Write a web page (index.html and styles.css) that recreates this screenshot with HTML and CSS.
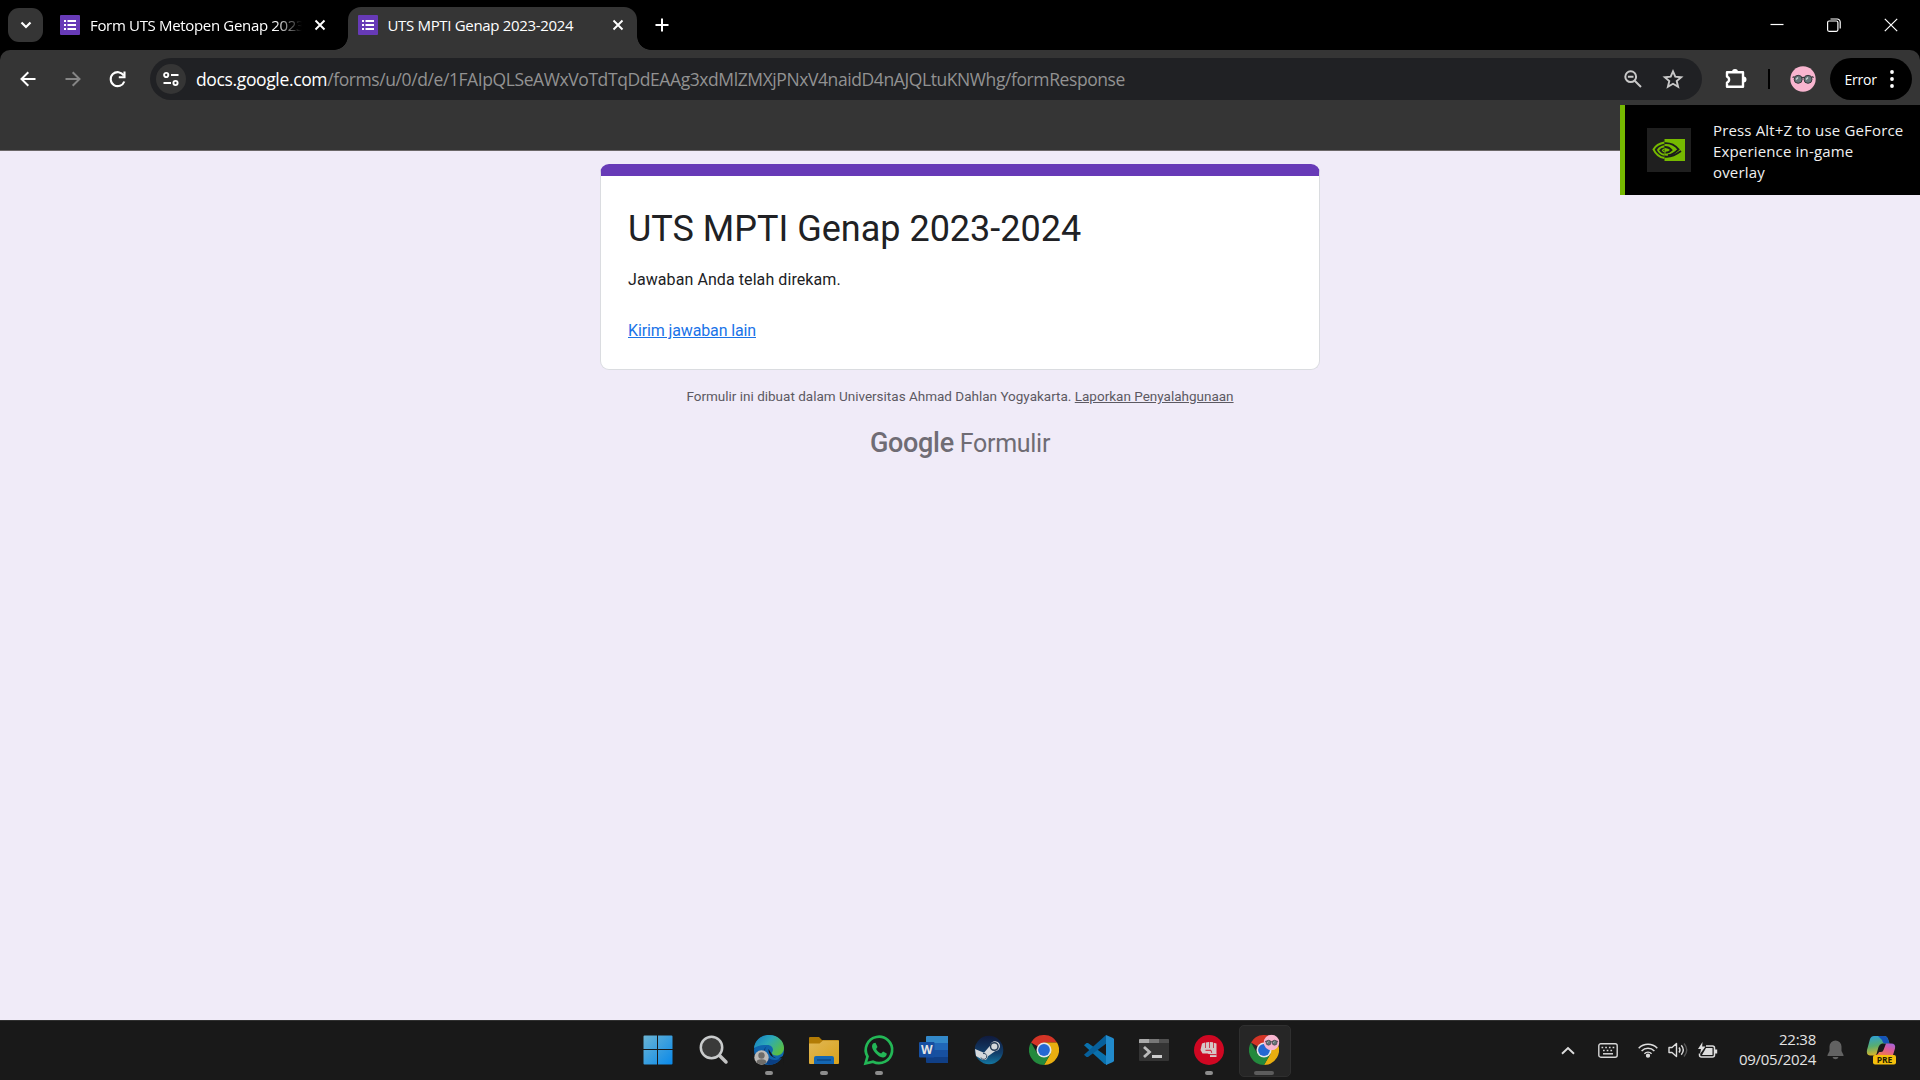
FILE: index.html
```html
<!DOCTYPE html>
<html lang="id">
<head>
<meta charset="utf-8">
<title>UTS MPTI Genap 2023-2024</title>
<link rel="stylesheet" href="styles.css">
</head>
<body>
<svg class="defs" width="0" height="0" aria-hidden="true">
  <defs>
    <symbol id="form" viewBox="0 0 20 20"><rect width="20" height="20" rx="1" fill="#673ab7"/><path d="M4 5h2v2H4zM4 9h2v2H4zM4 13h2v2H4zM7.500 5H16v2H7.500zM7.500 9H16v2H7.500zM7.500 13H16v2H7.500z" fill="#fff"/></symbol>
    <symbol id="x" viewBox="0 0 12 12"><path d="M1.500 1.500l9 9M10.500 1.500l-9 9" stroke="#fff" stroke-width="1.900" fill="none"/></symbol>
    <symbol id="chrome" viewBox="0 0 30 30">
      <path d="M15 15L2 7.500A15 15 0 0 1 28 7.500H15z" fill="#d33426"/>
      <path d="M28 7.500A15 15 0 0 1 15 30L21.500 18.750L15 7.500z" fill="#e9ae10"/>
      <path d="M2 7.500A15 15 0 0 0 15 30L21.500 18.750L15 15L8.500 18.750z" fill="#23893d"/>
      <circle cx="15" cy="15" r="7.500" fill="#e4e6ea"/><circle cx="15" cy="15" r="5.900" fill="#2468d2"/>
    </symbol>
    <symbol id="face" viewBox="0 0 26 26"><circle cx="13" cy="13" r="12.700" fill="#f8b5cf"/><g stroke="#35373b" stroke-width="1" fill="#657478"><circle cx="8.200" cy="13.300" r="4"/><circle cx="18" cy="13.300" r="4"/></g><path d="M2.500 11.500l2-.8M23.700 11.500l-2-.8M11.500 12q1.600-1.300 3.200 0" stroke="#35373b" stroke-width="1.300" fill="none"/><path d="M6 13.500l2-2M16 13.500l2-2" stroke="#c9d3d3" stroke-width="1.300"/></symbol>
  </defs>
</svg>

<header class="tabstrip">
  <button class="tab-search"><svg width="12" height="8" viewBox="0 0 12 8"><path d="M1.500 1.500L6 6l4.500-4.500" fill="none" stroke="#fff" stroke-width="2.200"/></svg></button>
  <div class="tab">
    <svg width="20" height="20"><use href="#form"/></svg>
    <span class="tab-title tab-title-cut">Form UTS Metopen Genap 2023</span>
    <svg width="12" height="12"><use href="#x"/></svg>
  </div>
  <div class="tab tab-active">
    <svg width="20" height="20"><use href="#form"/></svg>
    <span class="tab-title">UTS MPTI Genap 2023-2024</span>
    <svg width="12" height="12"><use href="#x"/></svg>
  </div>
  <svg class="new-tab" width="14" height="14" viewBox="0 0 14 14"><path d="M7 .5v13M.5 7h13" stroke="#fff" stroke-width="2"/></svg>
  <div class="window-controls">
    <svg width="14" height="14" viewBox="0 0 14 14"><path d="M.5 6.500h13" stroke="#fff" stroke-width="1.200"/></svg>
    <svg width="14" height="14" viewBox="0 0 14 14" fill="none" stroke="#fff"><rect x=".6" y="3" width="10.300" height="10.300" rx="1.500" stroke-width="1.200"/><path d="M3.500 1h6.700a3 3 0 0 1 3 3v6.500" stroke-width="1.200"/></svg>
    <svg width="14" height="14" viewBox="0 0 14 14"><path d="M.8.8l12.400 12.400M13.200.8L.8 13.200" stroke="#fff" stroke-width="1.200"/></svg>
  </div>
</header>

<div class="toolbar">
  <div class="nav">
    <svg width="16" height="16" viewBox="0 0 16 16" fill="none" stroke="#fff" stroke-width="2"><path d="M15.500 8H2M8.300 1.200L1.500 8l6.800 6.800"/></svg>
    <svg width="16" height="16" viewBox="0 0 16 16" fill="none" stroke="#868686" stroke-width="2"><path d="M.5 8H14M7.700 1.200L14.500 8l-6.800 6.800"/></svg>
    <svg width="17" height="17" viewBox="0 0 17 17" fill="none" stroke="#fff" stroke-width="2.100"><path d="M14.700 4.500A7 7 0 1 0 15.300 10.500M15.500.500v5.700H9.800"/></svg>
  </div>
  <div class="omnibox">
    <span class="site-info"><svg width="16" height="14" viewBox="0 0 16 14" fill="none" stroke="#fff" stroke-width="1.900"><circle cx="3.200" cy="3" r="2.100"/><path d="M8 3h7.500M.5 11H8"/><circle cx="12.500" cy="11" r="2.100"/></svg></span>
    <span class="url"><b>docs.google.com</b>/forms/u/0/d/e/1FAIpQLSeAWxVoTdTqDdEAAg3xdMlZMXjPNxV4naidD4nAJQLtuKNWhg/formResponse</span>
    <svg class="zoom" width="18" height="18" viewBox="0 0 18 18" fill="none" stroke="#c8c8c8" stroke-width="2"><circle cx="6.700" cy="6.700" r="5.400"/><path d="M10.700 10.700l6.300 6.300M3.900 6.700h5.600"/></svg>
    <svg width="20" height="20" viewBox="0 0 20 20" fill="none" stroke="#c8c8c8" stroke-width="1.900"><path d="M10 2.300l2.300 5.400 5.900.500-4.500 3.900 1.400 5.700L10 14.800l-5.100 3 1.400-5.700L1.800 8.200l5.900-.5z"/></svg>
  </div>
  <svg class="ext" width="22" height="22" viewBox="0 0 22 22"><path d="M2 4.200h16v14.600H2v-4.300a3.200 3.200 0 0 0 0-6z" fill="none" stroke="#fff" stroke-width="2.400" stroke-linejoin="round"/><path d="M7 4a3 3 0 0 1 6 0zM18.500 8.500a3 3 0 0 1 0 6z" fill="#fff"/></svg>
  <i class="sep"></i>
  <svg class="avatar" width="26" height="26"><use href="#face"/></svg>
  <div class="error"><span>Error</span><svg width="4" height="18" viewBox="0 0 4 18" fill="#fff"><circle cx="2" cy="2" r="1.900"/><circle cx="2" cy="9" r="1.900"/><circle cx="2" cy="16" r="1.900"/></svg></div>
</div>

<aside class="toast">
  <span class="toast-icon"><svg width="34" height="24" viewBox="0 0 34 24" fill="none"><path d="M12.500 1H33v22H12.500z" fill="#76b900"/><g stroke="#76b900"><path d="M12.500 4.500C7 5.500 3 8.800 1.500 11.400c1.800 4 6 7.800 11 8.700" stroke-width="2"/><path d="M12.500 8.300C9 8.800 7 10.500 6 12c1 2.500 3.500 4.300 6.500 4.800" stroke-width="1.900"/><path d="M12.500 11.200q-1.500.3-2 1.300.7 1 2 1.500" stroke-width="1.300"/></g><g stroke="#1b1b1b"><path d="M12.500 5.200c6-.5 10.500 2 14 6.100-3 3-7.500 5.700-10.500 6" stroke-width="1.900"/><path d="M12.500 9c3.500-.2 5.500 1.200 7 3-1.700 1.800-3.500 2.800-6 2.800M12.500 18.500c6.500 1 12.500-2.500 16.500-5.500" stroke-width="1.900"/></g></svg></span>
  <p>Press Alt+Z to use GeForce<br>Experience in-game<br>overlay</p>
</aside>

<main class="page">
  <section class="card">
    <h1>UTS MPTI Genap 2023-2024</h1>
    <p>Jawaban Anda telah direkam.</p>
    <a class="again">Kirim jawaban lain</a>
  </section>
  <p class="note">Formulir ini dibuat dalam Universitas Ahmad Dahlan Yogyakarta. <a>Laporkan Penyalahgunaan</a></p>
  <p class="brand"><b>Google</b><span>Formulir</span></p>
</main>

<footer class="taskbar">
  <div class="apps">
    <span class="app start"><svg width="30" height="30" viewBox="0 0 30 30"><defs><linearGradient id="wg" x1="0" y1="0" x2="30" y2="30" gradientUnits="userSpaceOnUse"><stop stop-color="#6cb5d4"/><stop offset="1" stop-color="#0788ea"/></linearGradient></defs><path d="M1.500.500H14V14H.5V1.500a1 1 0 0 1 1-1zM15 .5h13.500a1 1 0 0 1 1 1V14H15zM.5 15H14v14.500H1.500a1 1 0 0 1-1-1zM15 15h14.500v13.500a1 1 0 0 1-1 1H15z" fill="url(#wg)"/></svg></span>
    <span class="app"><svg width="30" height="30" viewBox="0 0 30 30"><path d="M20.500 20.500l6.500 6.500" stroke="#c2c2c2" stroke-width="3.500" stroke-linecap="round"/><circle cx="12.500" cy="12.500" r="10.700" fill="#3a3a3a" stroke="#c9cbcc" stroke-width="2.500"/></svg></span>
    <span class="app run"><svg width="30" height="30" viewBox="0 0 30 30"><defs><linearGradient id="eg" x1="0" y1="0" x2="1" y2=".6"><stop stop-color="#1479c4"/><stop offset=".5" stop-color="#2ba9b9"/><stop offset="1" stop-color="#58be45"/></linearGradient></defs><circle cx="15" cy="15" r="15" fill="#0f64ae"/><path d="M0 13C1 5 7 0 15 0c9 0 15 6 15 13 0 5-4 7.500-7.500 7.500-4 0-5.500-2-4-4 1.500-3-1-6.500-5-6.500C8 9.500 3 11 0 13z" fill="url(#eg)"/><path d="M13 11c-5 5 0 15 9 14 3-.3 5-2 6-3-3 5-8 8-13 8-7-3-9-14-2-19z" fill="#0a3f83"/><path d="M14.500 14c-.5 5 4 9.500 10 9.500l5.500-3v9l-1-7c-5 2-10 .5-11-3z" fill="#181818"/><circle cx="7.500" cy="22.500" r="7.200" fill="#bcbab7"/><circle cx="7.500" cy="20.500" r="3.200" fill="#6e6c69"/><path d="M2.500 27.500q0-3.200 5-3.200t5 3.200q-5 4-10 0z" fill="#6e6c69"/></svg></span>
    <span class="app run"><svg width="30" height="30" viewBox="0 0 30 30"><path d="M0 3a1 1 0 0 1 1-1h9l3 3h16a1 1 0 0 1 1 1v5H0z" fill="#b27b05"/><defs><linearGradient id="fg" x1="0" y1="0" x2="1" y2="1"><stop stop-color="#e0b756"/><stop offset="1" stop-color="#daa21a"/></linearGradient></defs><path d="M0 8.500h10.500L14 5.500h15.500l.5.500v22a1 1 0 0 1-1 1H1a1 1 0 0 1-1-1z" fill="url(#fg)"/><path d="M5 29v-6q0-2 2-2h16q2 0 2 2v6z" fill="#1467b3"/><path d="M8 25h14" stroke="#0a437f" stroke-width="1.300"/></svg></span>
    <span class="app run"><svg width="30" height="30" viewBox="0 0 30 30"><path d="M1.500 28.500l2-7A13.200 13.200 0 1 1 9 26.700z" fill="none" stroke="#23b756" stroke-width="2.700"/><path d="M9.500 8.200l2-.4 2 4.200-1.400 2c1 2 2.800 3.600 5 4.500l2-1.900 3.600 1.900c.3 2.500-2 4-4 4C14 22 8 15.500 8 11.500c0-1.500.7-2.700 1.500-3.300z" fill="#23b756"/></svg></span>
    <span class="app"><svg width="30" height="30" viewBox="0 0 30 30"><path d="M7 2a1 1 0 0 1 1-1h21v7H7z" fill="#3389c9"/><path d="M7 8h22v7H7z" fill="#2067b7"/><path d="M7 15h22v7H7z" fill="#1750a0"/><path d="M7 22h22v6H8a1 1 0 0 1-1-1z" fill="#103f86"/><rect y="7" width="15.500" height="15.500" rx="1" fill="#164fa1"/><text x="7.700" y="19" text-anchor="middle" class="word">W</text></svg></span>
    <span class="app"><svg width="30" height="30" viewBox="0 0 30 30"><defs><linearGradient id="sg" x2="0" y2="1"><stop stop-color="#101a3d"/><stop offset=".6" stop-color="#123d68"/><stop offset="1" stop-color="#1377a2"/></linearGradient></defs><circle cx="15" cy="15" r="14.300" fill="url(#sg)"/><path d="M1 14l9 3.700 6-7a5 5 0 1 1 5 5.500l-7 5q-1 4.500-5.200 3.800L2 21z" fill="#d5d8db"/><circle cx="20.300" cy="11.500" r="3.800" fill="#d5d8db" stroke="#273b55" stroke-width="1.500"/><path d="M7 22.500a3 3 0 1 0 2-4" fill="none" stroke="#374d65"/></svg></span>
    <span class="app"><svg width="30" height="30"><use href="#chrome"/></svg></span>
    <span class="app"><svg width="30" height="30" viewBox="0 0 30 30"><path d="M2.500 8L0 10.300l20 18.300L23 30v-8.500L4 8z" fill="#0a71ad"/><path d="M22 0L0 19.700 2.500 22H4L23 8z" fill="#07609b"/><path d="M22 0l7 3 1 1v22l-1 1-7 3z" fill="#218acb"/></svg></span>
    <span class="app"><svg width="30" height="30" viewBox="0 0 30 30"><rect y="4" width="30" height="22" rx="1" fill="#343434"/><path d="M0 8V5a1 1 0 0 1 1-1h9v4z" fill="#aaa"/><path d="M10 4h10v4H10z" fill="#777"/><path d="M20 4h9a1 1 0 0 1 1 1v3H20z" fill="#505050"/><path d="M5 12l5.500 5L5 22" fill="none" stroke="#bbb" stroke-width="2.800"/><path d="M13 21.500h10" stroke="#ccc" stroke-width="3"/></svg></span>
    <span class="app run"><svg width="30" height="30" viewBox="0 0 30 30"><circle cx="15" cy="15" r="15" fill="#cf0722"/><path d="M8 8.500l3-1V13h.7V7.500l3.300-.5v6h.7V7l3.300.3V13h.7V7.800l2.800.7V22H16v-2.500l-2.500-1H8.500L6.500 15z" fill="#d5c7c7"/><path d="M11.500 15.300h5.500l.7 2.500M15 19.600h7.500" fill="none" stroke="#cf0722" stroke-width=".9"/></svg></span>
    <span class="app run focus"><svg width="30" height="30" viewBox="0 0 30 30"><use href="#chrome"/><use href="#face" x="14.500" y="-.5" width="16" height="16"/></svg></span>
  </div>
  <div class="tray">
    <svg class="t1" width="14" height="9" viewBox="0 0 14 9"><path d="M1 7.800L7 2l6 5.800" fill="none" stroke="#ddd" stroke-width="1.900"/></svg>
    <svg class="t2" width="20" height="15" viewBox="0 0 20 15" fill="none" stroke="#d6d6d6"><rect x=".8" y=".8" width="18.400" height="13.400" rx="2" stroke-width="1.400"/><path d="M3.500 4.500h13M5 7.500h11" stroke-width="1.700" stroke-dasharray="1.700 2"/><path d="M5 10.800h10" stroke-width="1.500"/></svg>
    <svg class="t3" width="20" height="16" viewBox="0 0 20 16" fill="none" stroke="#ddd" stroke-width="1.500"><path d="M.7 6.200a13 13 0 0 1 18.600 0M3.600 9a9 9 0 0 1 12.800 0M6.400 11.700a5.200 5.200 0 0 1 7.200 0"/><circle cx="10" cy="13.700" r="1.400" fill="#ddd"/></svg>
    <svg class="t4" width="20" height="16" viewBox="0 0 20 16" fill="none" stroke="#ddd" stroke-width="1.400"><path d="M1 5.500h3L8.500 1.500v13L4 10.500H1z" stroke-linejoin="round"/><path d="M11 5.500q2 2.500 0 5M13.300 3.300q4 4.700 0 9.400"/><path d="M16 1.500q5.500 6.500 0 13" stroke="#555"/></svg>
    <svg class="t5" width="20" height="17" viewBox="0 0 20 17"><path d="M8 4h6.500q2 0 2 2v7q0 2-2 2H3.500q-2 0-2-2v-1.500" fill="none" stroke="#ddd" stroke-width="1.500"/><path d="M8 6h6.500v7H4z" fill="#ddd"/><path d="M18 7.500v4" stroke="#ddd" stroke-width="2.400"/><path d="M4.500 0L0 7h3L2 12l5.500-7.500H4.200z" fill="#ddd"/></svg>
    <div class="clock"><span>22:38</span><span>09/05/2024</span></div>
    <svg class="t6" width="17" height="20" viewBox="0 0 17 20" fill="#626262"><path d="M8.500.500A6 6 0 0 0 2.500 6.500V11L.5 15v1h16v-1l-2-4V6.500a6 6 0 0 0-6-6zM5.500 17h6q-.7 2.300-3 2.300t-3-2.300z"/></svg>
    <svg class="t7" width="30" height="30" viewBox="0 0 30 30"><defs><linearGradient id="cl" x1="0" y1="0" x2=".2" y2="1"><stop stop-color="#2aa0dc"/><stop offset=".55" stop-color="#58ad70"/><stop offset="1" stop-color="#d7b52a"/></linearGradient><linearGradient id="cr" x1="1" y1="0" x2=".4" y2="1"><stop stop-color="#9c65e4"/><stop offset=".5" stop-color="#d95b9c"/><stop offset="1" stop-color="#ee7752"/></linearGradient></defs><path d="M8 1h10q3 0 4 3l1.500 4.500H16Q13.500 9 12.500 12l-2 7q-1 1.500-3 1.500H4Q0 20 1 15L4 4q1.200-3 4-3z" fill="url(#cl)"/><path d="M12 1h6q3 0 4 3l1.500 4.500H19Q17 8.500 16 5z" fill="#1554b8"/><path d="M20 8.500h5q5 0 4 5L27 20H9q3 0 4-3h2q2 0 2.500-2z" fill="url(#cr)"/><rect x="7" y="20" width="23" height="9.500" rx="2" fill="#f4bf0c"/><text x="18.500" y="27.800" text-anchor="middle" class="pre">PRE</text></svg>
  </div>
</footer>
</body>
</html>
```
FILE: styles.css
```css
* { box-sizing: border-box; }
body { margin: 0; width: 1920px; height: 1080px; overflow: hidden; display: flex; flex-direction: column; background: #f0ebf8; font-family: "Open Sans", "Noto Sans", sans-serif; color: #fff; }
p, h1 { margin: 0; font-weight: 400; }
svg { display: block; flex: none; overflow: visible; }
.defs { position: absolute; }

.tabstrip { height: 50px; background: #000; display: flex; align-items: center; padding-left: 8px; }
.tab-search { width: 35px; height: 34px; border: 0; border-radius: 11px; background: #353535; display: grid; place-items: center; padding: 0; }
.tab { display: flex; align-items: center; margin-left: 17px; width: 288px; }
.tab-title { flex: 1; margin-left: 9.500px; font-size: 15px; letter-spacing: -0.330px; line-height: 20px; white-space: nowrap; overflow: hidden; }
.tab-title-cut { flex: none; width: 214px; margin: 0 10px; -webkit-mask-image: linear-gradient(to right, #000 185px, transparent 212px); mask-image: linear-gradient(to right, #000 185px, transparent 212px); }
.tab-active { position: relative; margin-left: 0; width: 289px; height: 43px; align-self: flex-end; padding: 0 13px 7px 10px; background: #353535; border-radius: 13px 13px 0 0; }
.tab-active::before, .tab-active::after { content: ""; position: absolute; bottom: 0; width: 14px; height: 14px; }
.tab-active::before { left: -14px; background: radial-gradient(circle at 0 0, #000 13.5px, #353535 14.2px); }
.tab-active::after { right: -14px; background: radial-gradient(circle at 100% 0, #000 13.5px, #353535 14.2px); }
.new-tab { margin-left: 18px; }
.window-controls { margin-left: auto; display: flex; gap: 43px; padding-right: 22px; }

.toolbar { height: 101px; background: #353535; border-bottom: 1px solid #6b6768; border-radius: 10px 10px 0 0; box-shadow: 0 -10px 0 10px #000; clip-path: inset(0 0 0 0); display: flex; align-items: flex-start; padding: 8px 8px 0 20px; }
.nav { display: flex; align-items: center; gap: 28.5px; height: 42px; width: 130px; }
.omnibox { width: 1552px; height: 42px; border-radius: 21px; background: #202124; display: flex; align-items: center; padding: 0 19px 0 6px; }
.site-info { width: 30px; height: 30px; border-radius: 50%; background: #353535; display: grid; place-items: center; }
.url { flex: 1; margin-left: 10px; font-size: 17.5px; letter-spacing: -0.410px; line-height: 24px; color: #929292; white-space: nowrap; }
.url b { font-weight: 400; letter-spacing: -0.360px; color: #fff; }
.zoom { margin-right: 21px; }
.ext { margin: 10px 0 0 23px; }
.sep { width: 2px; height: 20px; margin: 11px 0 0 21px; background: #000; }
.avatar { margin: 8px 0 0 20px; }
.error { margin-left: auto; width: 82px; height: 42px; border-radius: 21px; background: #000; display: flex; align-items: center; padding: 0 18px 0 14.500px; justify-content: space-between; font-size: 14px; letter-spacing: -0.200px; }

.toast { position: absolute; left: 1620px; top: 105px; width: 300px; height: 90px; background: #000; border-left: 5px solid #76b900; display: flex; align-items: flex-start; padding-top: 15px; }
.toast-icon { width: 44px; height: 44px; margin: 8px 22px 0; background: #1f1f1f; display: grid; place-items: center; }
.toast p { font-size: 15px; letter-spacing: 0.160px; line-height: 21px; white-space: nowrap; color: #f0f0f0; }

.page { flex: 1; padding-top: 13px; display: flex; flex-direction: column; align-items: center; font-family: Roboto, sans-serif; }
.card { width: 720px; height: 206px; border: 1px solid #dadce0; border-top: 12px solid #673ab7; border-radius: 9px; background: #fff; padding: 29px 27px; color: #202124; }
.card h1 { font-size: 36px; line-height: 48px; }
.card p { font-size: 16px; letter-spacing: 0.080px; line-height: 22px; margin-top: 16px; }
.again { display: inline-block; margin-top: 29px; font-size: 16px; letter-spacing: -0.130px; line-height: 22px; color: #1a73e8; text-decoration: underline; }
.note { margin-top: 18px; font-size: 13.5px; line-height: 17px; color: #5c5962; }
.note a { text-decoration: underline; }
.brand { display: flex; align-items: baseline; gap: 6px; margin-top: 20px; line-height: 36px; color: #6f6c74; }
.brand b { font-size: 27px; font-weight: 500; letter-spacing: -0.300px; }
.brand span { font-size: 25px; letter-spacing: -0.300px; }

.taskbar { height: 60px; background: #191919; border-top: 1px solid #303030; display: flex; }
.apps { display: flex; margin-left: 631.5px; }
.app { position: relative; width: 55px; height: 58px; display: grid; place-items: center; }
.app svg { position: relative; z-index: 1; }
.start { padding-right: 2px; }
.run::after { content: ""; position: absolute; left: 23.5px; bottom: 4px; width: 8px; height: 4px; border-radius: 2px; background: #8d8d8d; }
.focus::before { content: ""; position: absolute; left: 2.500px; top: 4px; width: 50px; height: 50px; border-radius: 5px; background: #262626; border: 1px solid #2f2f2f; }
.focus::after { left: 17.500px; width: 20px; background: #5c5c5c; }
.word { font: 700 12px "Open Sans", sans-serif; fill: #e5e5e5; }
.tray { margin-left: auto; height: 58px; display: flex; align-items: center; padding-right: 24px; }
.t2 { margin-left: 23px; }
.t3 { margin-left: 20px; }
.t4 { margin-left: 10px; }
.t5 { margin-left: 10px; }
.clock { width: 98px; padding-bottom: 2px; display: flex; flex-direction: column; align-items: flex-end; font-size: 15px; letter-spacing: -0.250px; line-height: 20px; color: #e3e3e3; }
.t6 { margin-left: 11px; }
.t7 { margin-left: 22px; }
.pre { font: 700 8.5px "Open Sans", sans-serif; fill: #221c00; }
```
